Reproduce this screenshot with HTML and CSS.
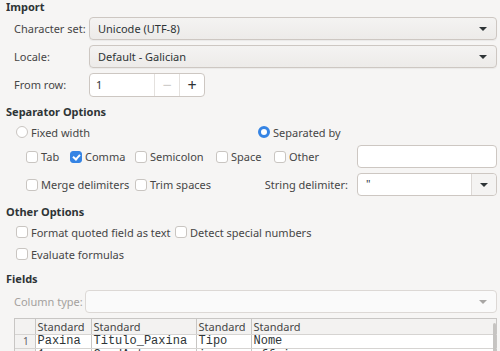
FILE: index.html
```html
<!DOCTYPE html>
<html lang="gl">
<head>
  <meta charset="UTF-8" />
  <title>Text Import</title>
  <link rel="stylesheet" href="styles.css">
</head>
<body>
  <div class="dialog">
    <!-- Import -->
    <div class="group-title first">Import</div>
    <div class="form-grid">
      <label class="field-label">Character set:</label>
      <div class="combo"><span>Unicode (UTF-8)</span><span class="arrow"></span></div>
      <label class="field-label">Locale:</label>
      <div class="combo"><span>Default - Galician</span><span class="arrow"></span></div>
      <label class="field-label">From row:</label>
      <div class="spin">
        <span class="spin-value">1</span>
        <span class="spin-btn disabled">&minus;</span>
        <span class="spin-btn">+</span>
      </div>
    </div>

    <!-- Separator Options -->
    <div class="group-title">Separator Options</div>
    <div class="radio-row">
      <label class="opt"><span class="radio"></span>Fixed width</label>
      <label class="opt"><span class="radio on"></span>Separated by</label>
    </div>
    <div class="sep-grid">
      <label class="opt"><span class="check"></span>Tab</label>
      <label class="opt"><span class="check on"></span>Comma</label>
      <label class="opt"><span class="check"></span>Semicolon</label>
      <label class="opt"><span class="check"></span>Space</label>
      <label class="opt"><span class="check"></span>Other</label>
      <div class="entry"></div>

      <label class="opt span2"><span class="check"></span>Merge delimiters</label>
      <label class="opt"><span class="check"></span>Trim spaces</label>
      <label class="field-label right span2">String delimiter:</label>
      <div class="entry-combo"><span class="entry-text">"</span><span class="entry-btn"><span class="arrow"></span></span></div>
    </div>

    <!-- Other Options -->
    <div class="group-title">Other Options</div>
    <div class="other-row">
      <label class="opt"><span class="check"></span>Format quoted field as text</label>
      <label class="opt"><span class="check"></span>Detect special numbers</label>
    </div>
    <div class="other-row">
      <label class="opt"><span class="check"></span>Evaluate formulas</label>
    </div>

    <!-- Fields -->
    <div class="group-title">Fields</div>
    <div class="coltype">
      <label class="field-label disabled">Column type:</label>
      <div class="combo disabled"><span></span><span class="arrow"></span></div>
    </div>
    <div class="preview">
      <table class="grid">
        <tr class="head">
          <td class="num"></td><td>Standard</td><td>Standard</td><td>Standard</td><td>Standard</td>
        </tr>
        <tr class="data">
          <td class="num">1</td><td>Paxina</td><td>Titulo_Paxina</td><td>Tipo</td><td>Nome</td>
        </tr>
        <tr class="data">
          <td class="num">2</td><td>1</td><td>CoudArte</td><td>imaxe</td><td>aff.jpg</td>
        </tr>
      </table>
      <div class="vscroll"></div>
    </div>
  </div>
</body>
</html>
```

FILE: styles.css
```css
* {
  box-sizing: border-box;
}

html, body {
  margin: 0;
  height: 100%;
  overflow: hidden;
}

body {
  background: #f6f5f4;
  font-family: 'Noto Sans', 'Open Sans', sans-serif;
  font-size: 11px;
  color: #464646;
}

.dialog {
  padding: 0 3px 0 6px;
}

.group-title {
  font-weight: bold;
  color: #2e3436;
  height: 14px;
  line-height: 14px;
  margin-top: 9px;
}

.group-title.first {
  margin-top: 0;
}

.field-label {
  color: #464646;
}

.field-label.right {
  text-align: right;
  padding-right: 9px;
}

.field-label.disabled {
  color: #a4a19e;
}

/* Import */
.form-grid {
  display: grid;
  grid-template-columns: 75px 1fr;
  grid-auto-rows: 23px;
  row-gap: 5px;
  align-items: center;
  margin-top: 3px;
  padding-left: 8px;
}

.combo {
  height: 23px;
  display: flex;
  align-items: center;
  justify-content: space-between;
  padding: 0 9px 0 8px;
  border: 1px solid #cdc7c2;
  border-radius: 4px;
  background: linear-gradient(#f4f3f2, #edebe9);
  box-shadow: 0 1px 1px rgba(0, 0, 0, 0.05);
  color: #2e3436;
}

.combo.disabled {
  background: #fafafa;
  border-color: #dcd8d5;
  box-shadow: none;
}

.arrow {
  width: 0;
  height: 0;
  border-left: 4px solid transparent;
  border-right: 4px solid transparent;
  border-top: 4px solid #2e3436;
}

.combo.disabled .arrow {
  border-top-color: #a8a6a4;
}

.spin {
  width: 116px;
  height: 24px;
  display: flex;
  background: #fff;
  border: 1px solid #cdc7c2;
  border-radius: 4px;
}

.spin-value {
  flex: 1;
  padding-left: 6px;
  line-height: 22px;
  color: #2e3436;
}

.spin-btn {
  width: 25px;
  border-left: 1px solid #e4e1de;
  text-align: center;
  line-height: 22px;
  font-size: 16px;
  color: #2e3436;
}

.spin-btn.disabled {
  color: #cfcdcb;
}

/* options */
.opt {
  display: flex;
  align-items: center;
  white-space: nowrap;
  color: #464646;
}

.check, .radio {
  width: 12px;
  height: 12px;
  margin-right: 3px;
  border: 1px solid #c9c5c1;
  background: #fff;
  flex: none;
  position: relative;
}

.check {
  border-radius: 3px;
}

.radio {
  border-radius: 50%;
}

.radio.on {
  border: 3.5px solid #3584e4;
}

.check.on {
  background: #3584e4;
  border-color: #3584e4;
}

.check.on::after {
  content: "";
  position: absolute;
  left: 2px;
  top: 1px;
  width: 5px;
  height: 3px;
  border-left: 2px solid #fff;
  border-bottom: 2px solid #fff;
  transform: translate(0, 1px) rotate(-48deg);
}

.radio-row {
  display: grid;
  grid-template-columns: 242px auto;
  height: 18px;
  align-items: center;
  margin-top: 4px;
  padding-left: 10px;
}

.sep-grid {
  display: grid;
  grid-template-columns: 44px 65px 81px 58px 83px 140px;
  grid-auto-rows: 23px;
  row-gap: 5px;
  align-items: center;
  margin-top: 4px;
  padding-left: 20px;
}

.span2 {
  grid-column: span 2;
}

.entry {
  height: 23px;
  background: #fff;
  border: 1px solid #cdc7c2;
  border-radius: 4px;
}

.entry-combo {
  height: 23px;
  display: flex;
  background: #fff;
  border: 1px solid #cdc7c2;
  border-radius: 4px;
}

.entry-text {
  flex: 1;
  padding-left: 8px;
  line-height: 20px;
  color: #2e3436;
}

.entry-btn {
  width: 25px;
  border-left: 1px solid #dcd8d5;
  background: #f4f3f2;
  border-radius: 0 4px 4px 0;
  display: flex;
  align-items: center;
  justify-content: center;
}

.other-row {
  display: grid;
  grid-template-columns: 159px auto;
  height: 18px;
  align-items: center;
  margin-top: 4px;
  padding-left: 10px;
}

/* Fields */
.coltype {
  display: grid;
  grid-template-columns: 71px 1fr;
  align-items: center;
  margin-top: 4px;
  padding-left: 8px;
}

.preview {
  position: relative;
  margin: 5px 0 0 8px;
  border-left: 1px solid #c8c6c4;
  border-top: 1px solid #c8c6c4;
}

.grid {
  border-collapse: collapse;
  width: 100%;
  table-layout: fixed;
}

.grid td {
  padding: 0 0 0 2px;
  border-right: 1px solid #c8c6c4;
  border-bottom: 1px solid #d6d4d2;
  white-space: nowrap;
  overflow: hidden;
  height: 14px;
  line-height: 13px;
}

.grid td:nth-child(1) { width: 20px; }
.grid td:nth-child(2) { width: 56px; }
.grid td:nth-child(3) { width: 105px; }
.grid td:nth-child(4) { width: 55px; }

.head td {
  background: #f3f2f1;
  color: #464646;
  height: 15px;
}

.data td {
  background: #fff;
  font-family: 'Liberation Mono', 'DejaVu Sans Mono', monospace;
  font-size: 12px;
  color: #2e3436;
}

.grid td.num {
  font-family: 'Noto Sans', sans-serif;
  font-size: 10px;
  text-align: center;
  background: #f3f2f1;
  color: #5e5c64;
}

.vscroll {
  position: absolute;
  right: 1px;
  top: 4px;
  width: 3px;
  height: 40px;
  background: #c6c4c2;
  border-radius: 2px;
}
```
